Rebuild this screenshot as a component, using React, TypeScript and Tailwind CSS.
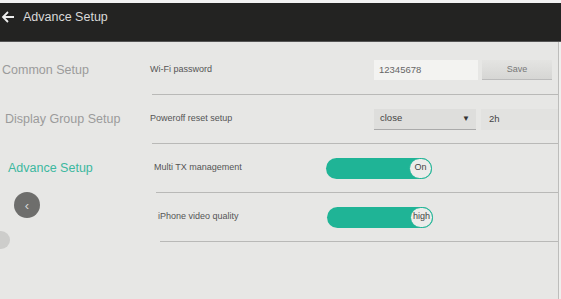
import React from 'react'

const rows = [
  { label: 'Wi-Fi password', kind: 'input' },
  { label: 'Poweroff reset setup', kind: 'select' },
  { label: 'Multi TX management', kind: 'toggle', knob: 'On' },
  { label: 'iPhone video quality', kind: 'toggle', knob: 'high' },
]

const menu = [
  { label: 'Common Setup', pl: 'pl-[2px]', active: false },
  { label: 'Display Group Setup', pl: 'pl-[5px]', active: false },
  { label: 'Advance Setup', pl: 'pl-[8px]', active: true },
]

function Toggle({ knob, ml }: { knob: string; ml: string }) {
  return (
    <div className={`relative ${ml} h-[21px] w-[106px] rounded-full bg-[#1fb496]`}>
      <div className="absolute right-0 top-0 flex h-[21px] w-[23px] items-center justify-center rounded-full border border-[#1fb496] bg-[#ececea] text-[9px] text-[#444]">
        {knob}
      </div>
    </div>
  )
}

export default function App() {
  return (
    <div className="flex h-[299px] w-[561px] flex-col overflow-hidden bg-[#e7e7e5] font-['Liberation_Sans',Arial,sans-serif]">
      {/* header */}
      <div className="h-[3px] bg-[#f2f2f2]" />
      <div className="flex h-[39px] items-start gap-[8px] border-b border-[#555] bg-[#232322] pt-[6px] text-[#e4e4e4]">
        <svg width="14" height="14" viewBox="0 0 14 14" className="ml-[1px] mt-[1px]">
          <path d="M13 7H2M7 2L2 7l5 5" fill="none" stroke="#eee" strokeWidth="1.8" />
        </svg>
        <span className="text-[12.5px] leading-[16px] text-[#d9d9d9]">Advance Setup</span>
      </div>

      <div className="flex flex-1">
        {/* sidebar */}
        <div className="flex w-[150px] shrink-0 flex-col pt-[4px]">
          {menu.map(m => (
            <div
              key={m.label}
              className={`flex h-[49px] items-center text-[12.5px] ${m.pl} ${m.active ? 'text-[#3cb89f]' : 'text-[#9b9b9b]'}`}
            >
              {m.label}
            </div>
          ))}
          <div className="ml-[14px] mt-[-1px] flex h-[26px] w-[26px] items-center justify-center rounded-full bg-[#6e6e6c] text-[13px] leading-none text-[#d8d8d8]">
            ‹
          </div>
          <div className="ml-[-10px] mt-[13px] h-[18px] w-[20px] rounded-full bg-[#cdcdcb]" />
        </div>

        {/* content */}
        <div className="flex flex-1 flex-col border-r border-[#bdbdbb] pt-[4px]">
          {rows.map((r, i) => (
            <div key={r.label} className={`flex h-[49px] flex-col ${i === 3 ? 'pl-[8px]' : i === 2 ? 'pl-[4px]' : ''}`}>
              <div className="flex flex-1 items-center">
                <span className="w-[150px] shrink-0 text-[9px] text-[#555]">{r.label}</span>
                {r.kind === 'input' && (
                  <div className="ml-[74px] flex items-center gap-[4px]">
                    <div className="flex h-[20px] w-[104px] items-center bg-[#f3f3f1] pl-[5px] text-[9.5px] text-[#666]">
                      12345678
                    </div>
                    <div className="flex h-[20px] w-[70px] items-center justify-center border-b border-[#bbb] bg-gradient-to-b from-[#e4e4e2] to-[#d6d6d4] text-[9px] text-[#777]">
                      Save
                    </div>
                  </div>
                )}
                {r.kind === 'select' && (
                  <div className="ml-[74px] flex items-center gap-[5px]">
                    <div className="flex h-[21px] w-[102px] items-center justify-between border-b border-[#aaa] bg-[#dededc] pl-[6px] pr-[6px] text-[9.5px] text-[#444]">
                      close
                      <span className="text-[8px] text-[#333]">▼</span>
                    </div>
                    <div className="flex h-[21px] w-[77px] items-center bg-[#e2e2e0] pl-[8px] text-[9.5px] text-[#444]">
                      2h
                    </div>
                  </div>
                )}
                {r.kind === 'toggle' && <Toggle knob={r.knob!} ml={i === 2 ? 'ml-[22px]' : 'ml-[19px]'} />}
              </div>
              <div className="ml-[2px] h-px bg-[#b9b9b7]" />
            </div>
          ))}
        </div>
        <div className="w-[2px] bg-[#efefed]" />
      </div>
    </div>
  )
}
